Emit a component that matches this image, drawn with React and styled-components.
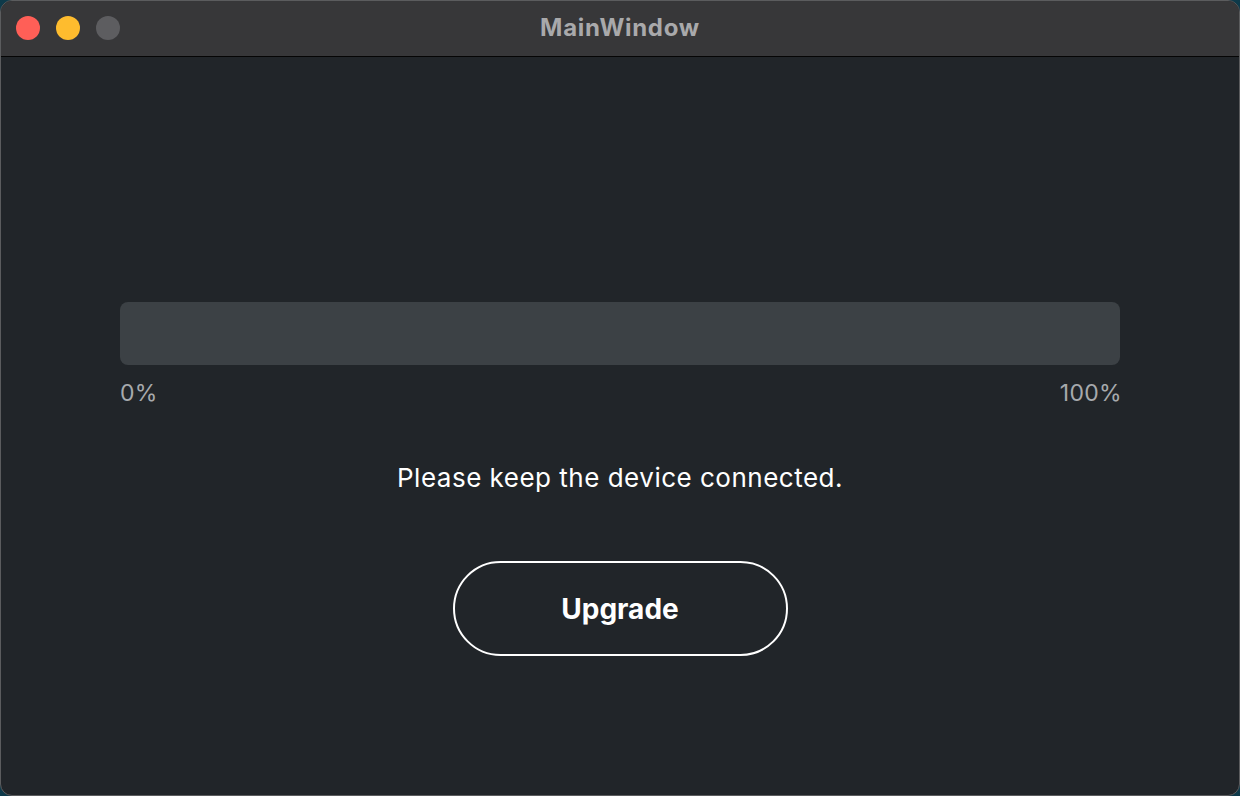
import React from "react";
import styled, { createGlobalStyle } from "styled-components";

const Global = createGlobalStyle`
  html, body {
    margin: 0;
    padding: 0;
    background: #0e3a4a;
    font-family: Inter, "Noto Sans", sans-serif;
  }
`;

const App = () => {
  return (
    <>
      <Global />
      <Window>
        <TitleBar>
          <Lights>
            <Light color="#ff5f57" />
            <Light color="#febc2e" />
            <Light color="#5d5d60" />
          </Lights>
          <Title>MainWindow</Title>
        </TitleBar>
        <Body>
          <Progress>
            <Track />
            <Scale>
              <span>0%</span>
              <span>100%</span>
            </Scale>
          </Progress>
          <Message>Please keep the device connected.</Message>
          <Button>Upgrade</Button>
        </Body>
      </Window>
    </>
  );
};

export default App;

const Window = styled.div`
  width: 1240px;
  height: 796px;
  box-sizing: border-box;
  border: 1px solid #5b5c5e;
  border-radius: 12px;
  overflow: hidden;
  background: #212529;
  display: flex;
  flex-direction: column;
`;
const TitleBar = styled.div`
  height: 56px;
  flex-shrink: 0;
  box-sizing: border-box;
  padding-bottom: 2px;
  background: #373739;
  border-bottom: 1px solid #050505;
  display: flex;
  align-items: center;
  justify-content: center;
  position: relative;
`;
const Lights = styled.div`
  position: absolute;
  left: 15px;
  top: 15px;
  display: flex;
  gap: 16px;
`;
const Light = styled.div`
  width: 24px;
  height: 24px;
  border-radius: 50%;
  background: ${(p) => p.color};
`;
const Title = styled.div`
  color: #a9a9ab;
  font-size: 24px;
  font-weight: 700;
  letter-spacing: 0.7px;
`;
const Body = styled.div`
  flex: 1;
  display: flex;
  flex-direction: column;
  align-items: center;
  padding: 245px 119px 0;
`;
const Progress = styled.div`
  width: 100%;
  display: flex;
  flex-direction: column;
`;
const Track = styled.div`
  height: 63px;
  border-radius: 8px;
  background: #3c4145;
`;
const Scale = styled.div`
  display: flex;
  justify-content: space-between;
  margin-top: 14px;
  margin-right: -2px;
  color: #a7aaad;
  font-size: 23px;
  line-height: 28px;
  letter-spacing: 0.3px;
`;
const Message = styled.div`
  margin-top: 55px;
  color: #ffffff;
  font-size: 26px;
  line-height: 32px;
  letter-spacing: 0.5px;
`;
const Button = styled.button`
  margin-top: 67px;
  width: 335px;
  height: 95px;
  border: 2px solid #ffffff;
  border-radius: 48px;
  background: transparent;
  color: #ffffff;
  font-family: Inter, "Noto Sans", sans-serif;
  font-size: 28px;
  font-weight: 700;
  cursor: pointer;
`;
